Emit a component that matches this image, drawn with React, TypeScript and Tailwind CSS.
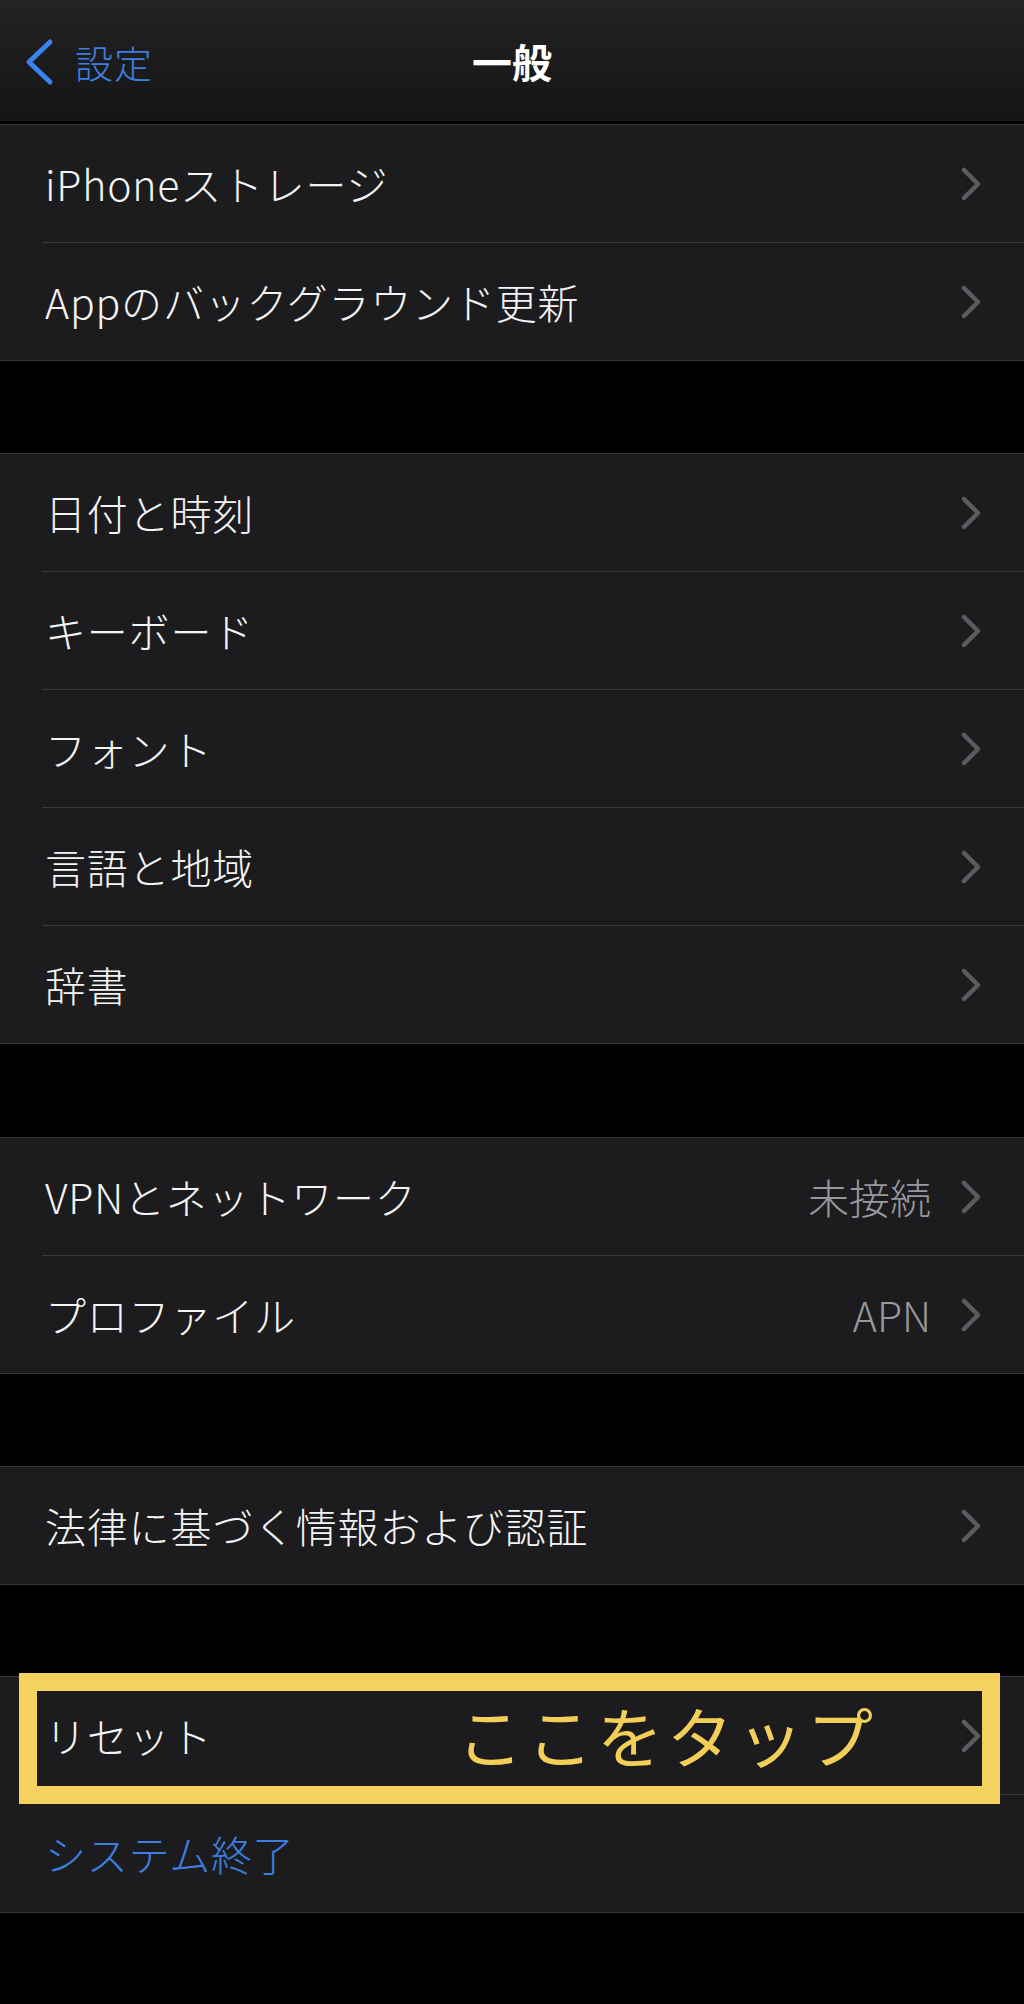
import React from "react";

type Row = { label: string; value?: string; blue?: boolean; noChevron?: boolean };

const groups: Row[][] = [
  [{ label: "iPhoneストレージ" }, { label: "Appのバックグラウンド更新" }],
  [
    { label: "日付と時刻" },
    { label: "キーボード" },
    { label: "フォント" },
    { label: "言語と地域" },
    { label: "辞書" },
  ],
  [
    { label: "VPNとネットワーク", value: "未接続" },
    { label: "プロファイル", value: "APN" },
  ],
  [{ label: "法律に基づく情報および認証" }],
  [{ label: "リセット" }, { label: "システム終了", blue: true, noChevron: true }],
];

function Chevron() {
  return (
    <svg width="20" height="34" viewBox="0 0 20 34" className="shrink-0">
      <polyline
        points="3,3 17,17 3,31"
        fill="none"
        stroke="#5c5c60"
        strokeWidth="4.5"
        strokeLinecap="round"
        strokeLinejoin="round"
      />
    </svg>
  );
}

function SettingsRow({ row }: { row: Row }) {
  return (
    <div className="flex h-[117px] items-center pl-[45px] pr-[43px]">
      <span
        className={
          "flex-1 text-[41px] font-light leading-none tracking-[0.8px] " +
          (row.blue ? "text-[#3d7fe0]" : "text-[#f4f4f4]")
        }
      >
        {row.label}
      </span>
      {row.value && (
        <span className="mr-[30px] text-[41px] font-light leading-none text-[#98989d]">{row.value}</span>
      )}
      {!row.noChevron && <Chevron />}
    </div>
  );
}

function Group({ rows, className, children }: { rows: Row[]; className: string; children?: React.ReactNode }) {
  return (
    <div className={"relative border-y border-[#36363a] bg-[#1c1c1e] " + className}>
      {rows.map((row, i) => (
        <div key={row.label}>
          {i > 0 && <div className="ml-[42px] h-px bg-[#3a3a3c]" />}
          <SettingsRow row={row} />
        </div>
      ))}
      {children}
    </div>
  );
}

export default function App() {
  return (
    <div
      className="h-[2004px] w-full overflow-hidden bg-black"
      style={{ fontFamily: '"Noto Sans CJK JP", "Noto Sans", sans-serif' }}
    >
      {/* nav bar */}
      <div className="relative flex h-[121px] items-center justify-center bg-gradient-to-b from-[#232323] to-[#151515]">
        <div className="absolute left-[23px] top-[38px] flex items-center">
          <svg width="32" height="48" viewBox="0 0 32 48">
            <polyline
              points="27,4 6,24 27,44"
              fill="none"
              stroke="#3b82f0"
              strokeWidth="5"
              strokeLinecap="round"
              strokeLinejoin="round"
            />
          </svg>
          <span className="ml-[20px] text-[38px] font-light leading-none tracking-[1px] text-[#3d7fe0]">設定</span>
        </div>
        <span className="text-[40px] font-bold leading-none text-white">一般</span>
      </div>

      <Group rows={groups[0]} className="mt-[3px]" />
      <Group rows={groups[1]} className="mt-[92px]" />
      <Group rows={groups[2]} className="mt-[93px]" />
      <Group rows={groups[3]} className="mt-[92px]" />
      <Group rows={groups[4]} className="mt-[91px]">
        {/* annotation overlay */}
        <div className="absolute left-[19px] top-[-4px] h-[131px] w-[981px] border-[18px] border-[#f5d160]">
          <span className="absolute left-[420px] top-[10px] text-[66px] leading-none tracking-[4px] text-[#f3cf5a]">
            ここをタップ
          </span>
        </div>
      </Group>
    </div>
  );
}
